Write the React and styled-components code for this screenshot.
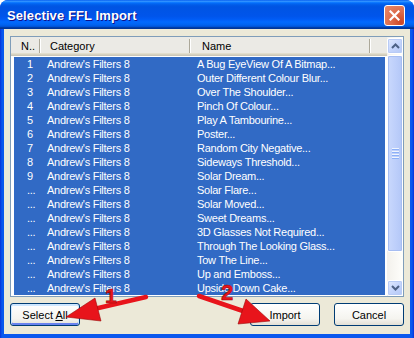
import styled, { createGlobalStyle } from 'styled-components'

const GlobalStyle = createGlobalStyle`
  body {
    margin: 0;
    background: #fff;
    font-family: "Liberation Sans", Arial, sans-serif;
  }
`

const filters = [
  ['1', 'A Bug EyeView Of A Bitmap...'],
  ['2', 'Outer Different Colour Blur...'],
  ['3', 'Over The Shoulder...'],
  ['4', 'Pinch Of Colour...'],
  ['5', 'Play A Tambourine...'],
  ['6', 'Poster...'],
  ['7', 'Random City Negative...'],
  ['8', 'Sideways Threshold...'],
  ['9', 'Solar Dream...'],
  ['...', 'Solar Flare...'],
  ['...', 'Solar Moved...'],
  ['...', 'Sweet Dreams...'],
  ['...', '3D Glasses Not Required...'],
  ['...', 'Through The Looking Glass...'],
  ['...', 'Tow The Line...'],
  ['...', 'Up and Emboss...'],
  ['...', 'Upside Down Cake...'],
]

const Window = styled.div`
  position: relative;
  width: 414px;
  height: 338px;
  display: flex;
  flex-direction: column;
  border-radius: 8px 8px 0 0;
  overflow: hidden;
  background: linear-gradient(to right, #0831d9 0, #0a58ee 2px, #0a58ee 412px, #0831d9 414px);
`

const TitleBar = styled.div`
  height: 29px;
  flex-shrink: 0;
  display: flex;
  align-items: center;
  justify-content: space-between;
  padding: 1px 9px 0 7px;
  box-sizing: border-box;
  background: linear-gradient(to bottom, #0058ee 0%, #3593ff 4%, #288eff 6%, #127dff 8%, #036ffc 10%, #0262ee 14%, #0057e5 20%, #0054e3 24%, #0055eb 56%, #005bf5 66%, #026afe 76%, #0062ef 86%, #0052d6 92%, #0040ab 94%, #003092 100%);
`

const Title = styled.div`
  color: #fff;
  font-weight: bold;
  font-size: 13px;
  letter-spacing: 0.1px;
  text-shadow: 1px 1px #0f1089;
`

const CloseButton = styled.div`
  width: 21px;
  height: 21px;
  box-sizing: border-box;
  border: 1px solid #fff;
  border-radius: 3px;
  display: flex;
  align-items: center;
  justify-content: center;
  background: radial-gradient(circle at 85% 85%, #cc4625 0%, #dc6b4b 45%, #e88a6b 100%);
`

const Body = styled.div`
  flex: 1;
  margin: 0 4px 4px;
  padding: 7px 6px 8px;
  display: flex;
  flex-direction: column;
  gap: 6px;
  background: #ece9d8;
`

const ListBox = styled.div`
  height: 261px;
  box-sizing: border-box;
  border: 1px solid #7f9db9;
  background: #fff;
  display: flex;
`

const ListMain = styled.div`
  flex: 1;
  min-width: 0;
  display: flex;
  flex-direction: column;
`

const Header = styled.div`
  height: 19px;
  flex-shrink: 0;
  box-sizing: border-box;
  display: flex;
  align-items: center;
  background: #ebeae5;
  border-bottom: 1px solid #cbc7b8;
  box-shadow: inset 0 -1px #d6d2c2, inset 0 -2px #e2decd;
  font-size: 11px;
  color: #000;
`

const HeaderCell = styled.div`
  width: ${p => p.$w}px;
  padding-left: ${p => p.$pad}px;
  box-sizing: border-box;
  white-space: nowrap;
  overflow: hidden;
`

const Separator = styled.div`
  width: 0;
  height: 14px;
  margin-bottom: 1px;
  border-left: 1px solid #aca899;
  border-right: 1px solid #fff;
`

const Rows = styled.div`
  flex: 1;
  overflow: hidden;
  padding: 1px 2px 0 3px;
`

const Row = styled.div`
  height: 14px;
  display: flex;
  background: #316ac5;
  color: #fff;
  font-size: 11px;
  line-height: 14px;
  letter-spacing: -0.25px;
`

const Cell = styled.div`
  width: ${p => p.$w}px;
  padding-left: ${p => p.$pad}px;
  box-sizing: border-box;
  white-space: nowrap;
  overflow: hidden;
`

const ScrollBar = styled.div`
  width: 16px;
  flex-shrink: 0;
  display: flex;
  flex-direction: column;
  padding: 1px 0 0;
  background: linear-gradient(to right, #f3f1ec, #fefefb);
`

const ScrollButton = styled.div`
  height: 16px;
  box-sizing: border-box;
  border: 1px solid #fff;
  border-radius: 2px;
  display: flex;
  align-items: center;
  justify-content: center;
  background: linear-gradient(135deg, #e2eafe 0%, #c5d5fc 50%, #b4c8f6 100%);
  box-shadow: inset 0 0 0 1px #b8cbf6;
  ${p => p.$down && 'margin-top: auto;'}
`

const Thumb = styled.div`
  height: 197px;
  margin-top: 1px;
  box-sizing: border-box;
  border: 1px solid #fff;
  border-radius: 2px;
  display: flex;
  flex-direction: column;
  align-items: center;
  justify-content: center;
  gap: 1px;
  background: linear-gradient(to right, #c9d8fc, #bccefa 60%, #b3c7f7);
  box-shadow: inset 0 0 0 1px #a6bdf2;
`

const Grip = styled.div`
  width: 7px;
  height: 1px;
  background: #eef4fe;
  border-bottom: 1px solid #8cb0f8;
`

const Actions = styled.div`
  display: flex;
  align-items: center;
  gap: 14px;
`

const Button = styled.div`
  width: 70px;
  height: 23px;
  box-sizing: border-box;
  border: 1px solid #003c74;
  border-radius: 3px;
  display: flex;
  align-items: center;
  justify-content: center;
  font-size: 11px;
  color: #000;
  white-space: pre;
  background: linear-gradient(to bottom, #fff 0%, #f5f4ef 70%, #e3e0d6 100%);
  ${p => p.$first && 'margin-right: auto;'}
  ${p => p.$focus && 'box-shadow: inset 0 1px 0 1px #cee7ff, inset 0 -1px 0 1px #6982ee;'}
`

const Accel = styled.span`
  text-decoration: underline;
`

const Annotations = styled.svg`
  position: absolute;
  left: 0;
  top: 0;
  pointer-events: none;
`

function ChevronIcon({ down }) {
  return (
    <svg width="9" height="6" viewBox="0 0 9 6">
      <path d={down ? 'M1 1 L4.5 4.5 L8 1' : 'M1 5 L4.5 1.5 L8 5'} fill="none" stroke="#4d6185" strokeWidth="2" />
    </svg>
  )
}

export default function App() {
  return (
    <>
      <GlobalStyle />
      <Window>
        <TitleBar>
          <Title>Selective FFL Import</Title>
          <CloseButton>
            <svg width="11" height="11" viewBox="0 0 11 11">
              <path d="M1.5 1.5 L9.5 9.5 M9.5 1.5 L1.5 9.5" stroke="#fff" strokeWidth="2.2" strokeLinecap="square" />
            </svg>
          </CloseButton>
        </TitleBar>
        <Body>
          <ListBox>
            <ListMain>
              <Header>
                <HeaderCell $w={28} $pad={10}>N..</HeaderCell>
                <Separator />
                <HeaderCell $w={148} $pad={9}>Category</HeaderCell>
                <Separator />
                <HeaderCell $w={178} $pad={11}>Name</HeaderCell>
                <Separator />
              </Header>
              <Rows>
                {filters.map(([num, name], i) => (
                  <Row key={i}>
                    <Cell $w={26} $pad={13}>{num}</Cell>
                    <Cell $w={150} $pad={7}>Andrew's Filters 8</Cell>
                    <Cell $w={180} $pad={7}>{name}</Cell>
                  </Row>
                ))}
              </Rows>
            </ListMain>
            <ScrollBar>
              <ScrollButton><ChevronIcon /></ScrollButton>
              <Thumb>
                <Grip /><Grip /><Grip /><Grip />
              </Thumb>
              <ScrollButton $down><ChevronIcon down /></ScrollButton>
            </ScrollBar>
          </ListBox>
          <Actions>
            <Button $first $focus><span>Select <Accel>A</Accel>ll</span></Button>
            <Button>Import</Button>
            <Button>Cancel</Button>
          </Actions>
        </Body>
        <Annotations width="414" height="338" viewBox="0 0 414 338">
          <g fill="#e8141b" stroke="#9a0a0a" strokeWidth="0.6">
            <path d="M146 297 L94 309" stroke="#e8141b" strokeWidth="4.5" strokeLinecap="round" />
            <polygon points="66,317 95,298 101,321" />
            <path d="M199 296 L243 311" stroke="#e8141b" strokeWidth="4.5" strokeLinecap="round" />
            <polygon points="270,321 246,299 238,324" />
            <text x="105" y="303" fontSize="21" fontWeight="bold" fontFamily="Liberation Sans, Arial, sans-serif">1</text>
            <text x="221" y="300" fontSize="22" fontWeight="bold" fontFamily="Liberation Sans, Arial, sans-serif">2</text>
          </g>
        </Annotations>
      </Window>
    </>
  )
}
